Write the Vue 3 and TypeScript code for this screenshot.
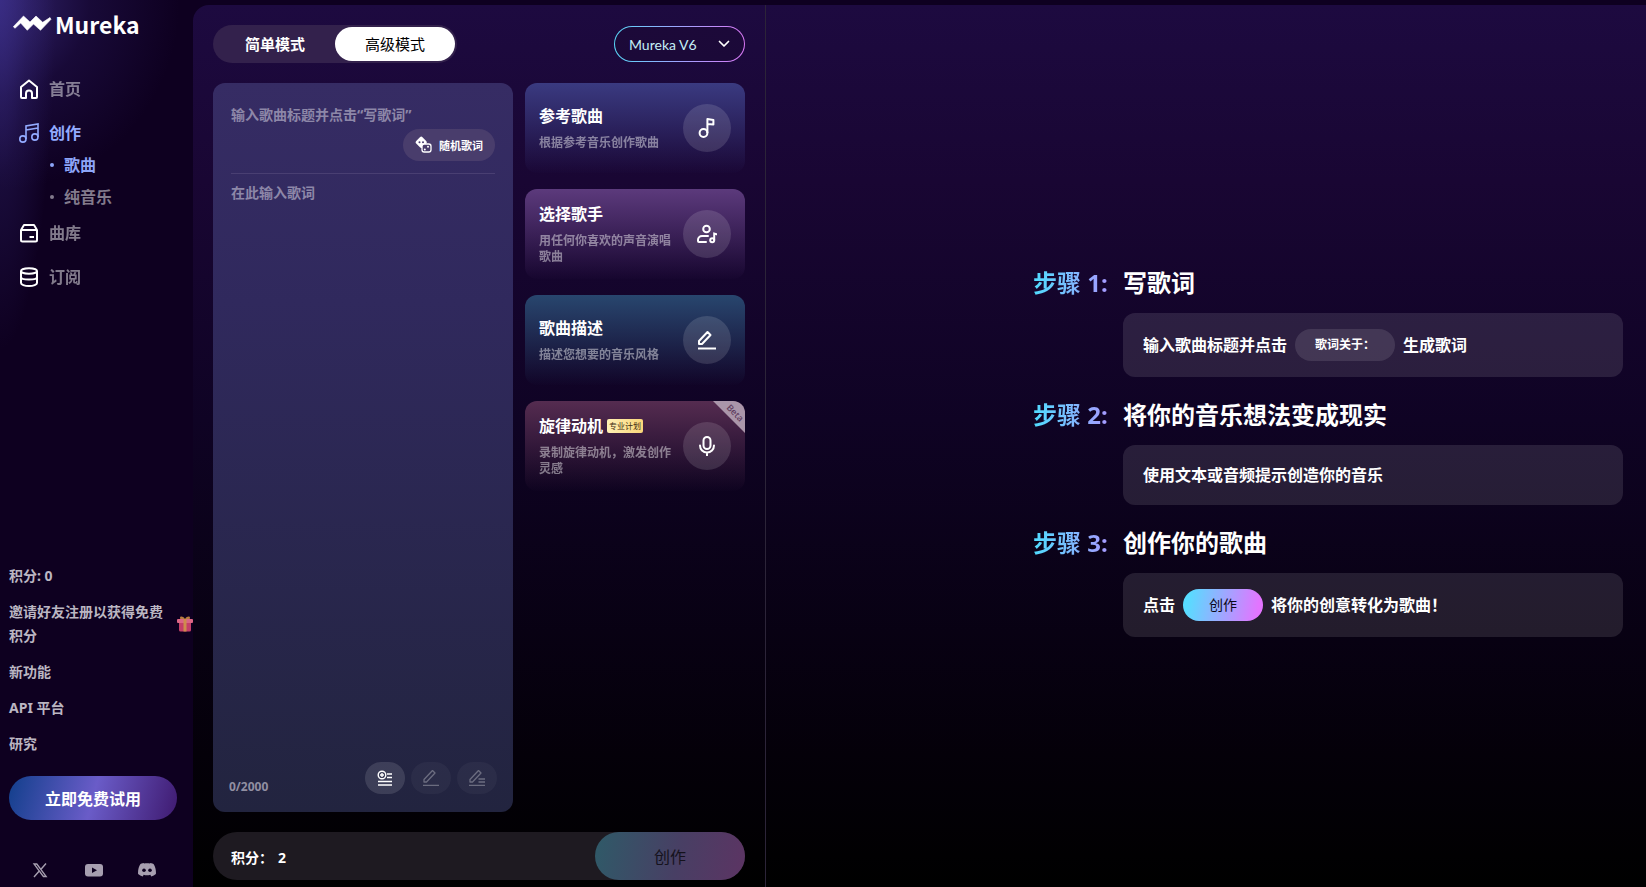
<script setup lang="ts">
import { ref } from 'vue'

type Mode = 'simple' | 'advanced'
type CardIcon = 'note' | 'singer' | 'pencil' | 'mic'

interface FeatureCard {
  id: string
  title: string
  text: string
  icon: CardIcon
  badge?: string
  ribbon?: string
}

const mode = ref<Mode>('advanced')
const version = ref('Mureka V6')
const title = ref('')
const lyrics = ref('')

const modes: { id: Mode; label: string }[] = [
  { id: 'simple', label: '简单模式' },
  { id: 'advanced', label: '高级模式' },
]

const cards: FeatureCard[] = [
  { id: 'reference', title: '参考歌曲', text: '根据参考音乐创作歌曲', icon: 'note' },
  { id: 'vocal', title: '选择歌手', text: '用任何你喜欢的声音演唱歌曲', icon: 'singer' },
  { id: 'prompt', title: '歌曲描述', text: '描述您想要的音乐风格', icon: 'pencil' },
  { id: 'motif', title: '旋律动机', text: '录制旋律动机，激发创作灵感', icon: 'mic', badge: '专业计划', ribbon: 'Beta' },
]

const links = ['新功能', 'API 平台', '研究']
</script>

<template>
  <div class="app">
    <aside class="sidebar">
      <a class="logo" href="#">
        <svg width="40" height="18" viewBox="0 0 40 18" aria-hidden="true">
          <path d="M.3 11.700 10.500 1 17 7l6-6 6.700 6.300L37 2.500l1 1.800-10.500 11L20.500 9l-6.200 6.300L7.700 8 2 13.300z" fill="#fff" stroke="#fff" stroke-width=".6" />
        </svg>
        <span>Mureka</span>
      </a>

      <nav class="nav">
        <a class="nav-item" href="#">
          <svg width="20" height="20" viewBox="0 0 20 20" fill="none" stroke="#fff" stroke-width="2" stroke-linejoin="round" aria-hidden="true">
            <path d="M2 8 10 1.500 18 8v10a1 1 0 0 1-1 1h-4v-4.500a3 3 0 0 0-6 0V19H3a1 1 0 0 1-1-1z" />
          </svg>
          <span>首页</span>
        </a>
        <a class="nav-item active" href="#">
          <svg width="20" height="20" viewBox="0 0 20 20" fill="none" stroke="#93abff" stroke-width="1.600" aria-hidden="true">
            <circle cx="3.900" cy="16" r="3.100" />
            <circle cx="15.900" cy="14" r="3.100" />
            <path d="M7 16V3l12-2v13M7 7l12-2" />
          </svg>
          <span>创作</span>
        </a>
        <div class="sub-nav">
          <a class="sub-item active" href="#">歌曲</a>
          <a class="sub-item" href="#">纯音乐</a>
        </div>
        <a class="nav-item library" href="#">
          <svg width="20" height="20" viewBox="0 0 20 20" fill="none" stroke="#fff" stroke-width="2" stroke-linejoin="round" aria-hidden="true">
            <path d="M2 7h16v10a1.500 1.500 0 0 1-1.500 1.500h-13A1.500 1.500 0 0 1 2 17zM2 7l3-5h10l3 5M10.500 14H15" />
          </svg>
          <span>曲库</span>
        </a>
        <a class="nav-item" href="#">
          <svg width="20" height="20" viewBox="0 0 20 20" fill="none" stroke="#fff" stroke-width="2" aria-hidden="true">
            <ellipse cx="10" cy="4" rx="8" ry="2.800" />
            <path d="M2 4v12c0 1.600 3.500 3 8 3s8-1.400 8-3V4M2 10c0 1.500 3.500 2.500 8 2.500s8-1 8-2.500" />
          </svg>
          <span>订阅</span>
        </a>
      </nav>

      <div class="side-links">
        <span>积分: 0</span>
        <a class="invite" href="#">
          <span>邀请好友注册以获得免费积分</span>
          <svg width="16" height="16" viewBox="0 0 16 16" aria-hidden="true">
            <path d="M8 3C6 0 3 0 3 2s3 2 5 1.500C10 4 13 4 13 2s-3-2-5 1" fill="#b97c40" />
            <path d="M2 6h12v8a1.500 1.500 0 0 1-1.500 1.500h-9A1.500 1.500 0 0 1 2 14z" fill="#c53f68" />
            <rect y="3" width="16" height="4" rx="1" fill="#dc6685" />
            <path d="M6.500 3h3v12.500h-3z" fill="#cf8c4c" />
          </svg>
        </a>
        <a v-for="link in links" :key="link" href="#">{{ link }}</a>
      </div>

      <button class="trial" type="button">立即免费试用</button>

      <div class="social">
        <a href="#" aria-label="X">
          <svg width="18" height="18" viewBox="0 0 18 18" fill="none" stroke="#a79fb0" aria-hidden="true">
            <path d="M3 3h2.800L15.200 15.500h-2.800z" stroke-width="1.300" />
            <path d="M15 2.500 10 8.200M8 10.200 3 16" stroke-width="1.400" />
          </svg>
        </a>
        <a href="#" aria-label="YouTube">
          <svg width="18" height="18" viewBox="0 0 18 18" aria-hidden="true">
            <rect y="3" width="18" height="12.500" rx="3" fill="#a79fb0" />
            <path d="m7 6.500 5 2.800-5 2.700z" fill="#0e0020" />
          </svg>
        </a>
        <a href="#" aria-label="Discord">
          <svg width="18" height="18" viewBox="0 0 18 18" aria-hidden="true">
            <path d="M6 2.500 5.600 2C4.200 2.200 3 2.700 2.300 3.200.7 5.800-.2 9 .1 13c1.400 1.200 2.900 2 4.600 2.400l1-1.700c2.200.7 4.400.7 6.600 0l1 1.700c1.700-.4 3.200-1.200 4.600-2.400.3-4-.6-7.200-2.200-9.800C15 2.700 13.800 2.200 12.400 2l-.4.500c-2-.4-4-.4-6 0z" fill="#a79fb0" />
            <circle cx="6" cy="9.200" r="1.800" fill="#0e0020" />
            <circle cx="12" cy="9.200" r="1.800" fill="#0e0020" />
          </svg>
        </a>
      </div>
    </aside>

    <main class="workspace">
      <section class="composer">
        <header class="toolbar">
          <div class="modes">
            <button
              v-for="item in modes"
              :key="item.id"
              type="button"
              :class="{ selected: mode === item.id }"
              @click="mode = item.id"
            >
              {{ item.label }}
            </button>
          </div>
          <div class="version">
            <select v-model="version" aria-label="模型版本">
              <option>Mureka V6</option>
            </select>
            <svg width="12" height="8" viewBox="0 0 12 8" fill="none" stroke="#fff" stroke-width="1.700" stroke-linecap="round" stroke-linejoin="round" aria-hidden="true">
              <path d="m1.500 1.500 4.500 4.500 4.500-4.500" />
            </svg>
          </div>
        </header>

        <div class="editor-row">
          <div class="editor">
            <input v-model="title" class="song-title" type="text" aria-label="歌曲标题" placeholder="输入歌曲标题并点击“写歌词”" />
            <div class="random-row">
              <button class="random" type="button">
                <svg width="18" height="18" viewBox="0 0 18 18" aria-hidden="true">
                  <path d="M6.200 2.500 2.500 6.300l3.700 3.800 3.700-3.800z" fill="#fff" stroke="#fff" stroke-width="3.600" stroke-linejoin="round" />
                  <circle cx="4.500" cy="6.300" r="1" fill="#493d70" />
                  <circle cx="8" cy="6.300" r="1" fill="#493d70" />
                  <rect x="7" y="8" width="9" height="8" rx="2.200" fill="#493d6c" stroke="#fff" stroke-width="1.300" />
                  <circle cx="9.800" cy="13.500" r="1" fill="#fff" />
                  <circle cx="13" cy="10.800" r="1" fill="#fff" />
                </svg>
                <span>随机歌词</span>
              </button>
            </div>
            <textarea v-model="lyrics" class="lyrics" aria-label="歌词" placeholder="在此输入歌词"></textarea>
            <div class="editor-tools">
              <span class="counter">{{ lyrics.length }}/2000</span>
              <button type="button" aria-label="添加段落">
                <svg width="16" height="16" viewBox="0 0 16 16" fill="none" stroke="#fff" stroke-width="1.400" aria-hidden="true">
                  <circle cx="5" cy="5" r="3.800" />
                  <path d="M3 5h4M5 3v4M10 4h5M10 7.500h5M1 11.500h14M1 15h14" />
                </svg>
              </button>
              <button type="button" disabled aria-label="改写歌词">
                <svg width="16" height="16" viewBox="0 0 16 16" fill="none" stroke="#fff" stroke-width="1.300" stroke-linejoin="round" aria-hidden="true">
                  <path d="m1 9.500 8.500-9 2.500 2.500-8.500 9H1zM0 15.500h16" />
                </svg>
              </button>
              <button type="button" disabled aria-label="续写歌词">
                <svg width="16" height="16" viewBox="0 0 16 16" fill="none" stroke="#fff" stroke-width="1.300" stroke-linejoin="round" aria-hidden="true">
                  <path d="m1 9.500 8.500-9 2.500 2.500-8.500 9H1zM9.500 9H16M9.500 12H16M0 15.500h16" />
                </svg>
              </button>
            </div>
          </div>

          <div class="cards">
            <button v-for="card in cards" :key="card.id" type="button" class="card" :class="card.id">
              <span class="card-copy">
                <span class="card-title">{{ card.title }}<span v-if="card.badge" class="badge">{{ card.badge }}</span></span>
                <span class="card-text">{{ card.text }}</span>
              </span>
              <span class="card-icon">
                <svg v-if="card.icon === 'note'" width="20" height="20" viewBox="0 0 20 20" fill="none" stroke="#fff" stroke-width="2" stroke-linejoin="round" aria-hidden="true">
                  <circle cx="6.500" cy="15" r="3.900" />
                  <path d="M10.400 15V1l6 1v4.500l-6-.5" />
                </svg>
                <svg v-else-if="card.icon === 'singer'" width="20" height="20" viewBox="0 0 20 20" fill="none" stroke="#fff" stroke-width="2" stroke-linecap="round" aria-hidden="true">
                  <circle cx="9.500" cy="5" r="3.300" />
                  <path d="M11 12H5a4 4 0 0 0-4 4v1a1 1 0 0 0 1 1h7M17.200 16V9.500l2.300.7" />
                  <circle cx="15.200" cy="16.200" r="2" />
                </svg>
                <svg v-else-if="card.icon === 'pencil'" width="20" height="20" viewBox="0 0 20 20" fill="none" stroke="#fff" stroke-width="2" stroke-linejoin="round" aria-hidden="true">
                  <path d="m2 11 8.500-9 3 3L5 14H2z" />
                  <path d="M1 18.500h18" />
                </svg>
                <svg v-else width="20" height="20" viewBox="0 0 20 20" fill="none" stroke="#fff" stroke-width="2" stroke-linecap="round" aria-hidden="true">
                  <rect x="6.500" y="1" width="7" height="12" rx="3.500" />
                  <path d="M3 9.500a7 7 0 0 0 14 0M10 16.500v3" />
                </svg>
              </span>
              <span v-if="card.ribbon" class="ribbon">{{ card.ribbon }}</span>
            </button>
          </div>
        </div>

        <footer class="create-bar">
          <div class="cost"><span>积分：</span><span>2</span></div>
          <button type="button" disabled>创作</button>
        </footer>
      </section>

      <section class="guide">
        <ol class="steps">
          <li class="step">
            <span class="step-label">步骤 1:</span>
            <h2>写歌词</h2>
            <div class="step-box">
              <span>输入歌曲标题并点击</span>
              <span class="pill muted">歌词关于：</span>
              <span>生成歌词</span>
            </div>
          </li>
          <li class="step">
            <span class="step-label">步骤 2:</span>
            <h2>将你的音乐想法变成现实</h2>
            <div class="step-box"><span>使用文本或音频提示创造你的音乐</span></div>
          </li>
          <li class="step">
            <span class="step-label">步骤 3:</span>
            <h2>创作你的歌曲</h2>
            <div class="step-box">
              <span>点击</span>
              <span class="pill bright">创作</span>
              <span>将你的创意转化为歌曲！</span>
            </div>
          </li>
        </ol>
      </section>
    </main>
  </div>
</template>

<style>
body {
  background: #0e0020;
}
</style>

<style scoped>
.app {
  display: flex;
  min-height: 100vh;
  color: #fff;
  font-family: "Noto Sans", "Noto Sans CJK SC", sans-serif;
  font-size: 16px;
  line-height: 24px;
  background: #0e0020;
}
.app *,
.app *::before {
  box-sizing: border-box;
}
a {
  color: inherit;
  text-decoration: none;
}
button,
input,
textarea,
select {
  margin: 0;
  padding: 0;
  border: 0;
  color: inherit;
  font-family: inherit;
  background: none;
}
svg {
  display: block;
  flex: none;
}

/* Sidebar */
.sidebar {
  display: flex;
  flex: none;
  flex-direction: column;
  width: 193px;
  padding-bottom: 8px;
  background:
    radial-gradient(ellipse 55px 350px at 0 0, rgba(60, 48, 140, 0.7), rgba(60, 48, 140, 0.25) 50%, transparent),
    radial-gradient(ellipse 180px 190px at 0 0, rgba(66, 52, 146, 0.7), rgba(60, 44, 140, 0.22) 50%, transparent),
    #0e0020;
}
.logo {
  display: flex;
  align-items: center;
  gap: 2px;
  height: 48px;
  padding-left: 13px;
  font-family: "Noto Sans CJK SC", sans-serif;
  font-size: 23px;
  font-weight: 700;
}
.nav {
  display: flex;
  flex-direction: column;
  gap: 20px;
  padding: 29px 19px 0;
}
.nav-item {
  display: flex;
  align-items: center;
  gap: 10px;
  font-weight: 700;
}
.nav-item span {
  opacity: 0.48;
}
.nav-item.active {
  color: #93abff;
}
.nav-item.active span {
  opacity: 1;
}
.sub-nav {
  display: flex;
  flex-direction: column;
  margin: -16px 0 -12px;
  padding-left: 31px;
}
.sub-item {
  display: flex;
  align-items: center;
  gap: 10px;
  height: 32px;
  color: #827a8c;
  font-weight: 700;
}
.sub-item::before {
  width: 4px;
  height: 4px;
  border-radius: 50%;
  background: currentColor;
  content: "";
}
.sub-item.active {
  color: #8da5f8;
}
.side-links {
  display: flex;
  flex-direction: column;
  gap: 12px;
  margin-top: auto;
  padding-left: 9px;
  color: #bbb6c2;
  font-size: 14px;
  font-weight: 700;
}
.invite {
  display: flex;
  align-items: center;
  gap: 12px;
}
.trial {
  flex: none;
  height: 44px;
  margin: 20px 16px 0 9px;
  border-radius: 22px;
  font-size: 16px;
  font-weight: 700;
  background: linear-gradient(105deg, #123f8c, #6a5cc8 50%, #3f1a70);
  cursor: pointer;
}
.social {
  display: flex;
  justify-content: space-between;
  margin-top: 41px;
  padding: 0 37px 0 31px;
}

/* Workspace */
.workspace {
  display: flex;
  flex: 1;
  min-width: 0;
  margin-top: 5px;
  border-radius: 16px 0 0 0;
  background: linear-gradient(180deg, #1d0a40 0%, #190633 20%, #0f0324 47%, #040009 85%, #000 100%);
}
.composer {
  display: flex;
  flex: none;
  flex-direction: column;
  gap: 20px;
  width: 573px;
  padding: 20px 20px 7px;
  border-right: 1px solid #2c2438;
}
.toolbar {
  display: flex;
  align-items: center;
  justify-content: space-between;
}
.modes {
  display: flex;
  padding: 2px;
  border-radius: 19px;
  background: #33214c;
}
.modes button {
  width: 120px;
  height: 34px;
  padding-bottom: 2px;
  border-radius: 17px;
  font-size: 15px;
  font-weight: 700;
  cursor: pointer;
}
.modes .selected {
  color: #000;
  font-weight: 400;
  background: #fff;
}
.version {
  position: relative;
  width: 131px;
  border: 1px solid transparent;
  border-radius: 18px;
  background:
    linear-gradient(#1c0939, #1b0938) padding-box,
    linear-gradient(90deg, #58d8f8, #9fa4ff 50%, #da78f5) border-box;
}
.version select {
  width: 100%;
  height: 34px;
  padding-left: 14px;
  color: #c4eef6;
  font-family: Lato, sans-serif;
  font-size: 14px;
  appearance: none;
}
.version svg {
  position: absolute;
  top: 13px;
  right: 14px;
  pointer-events: none;
}
.editor-row {
  display: flex;
  flex: 1;
  gap: 12px;
}
.editor {
  display: flex;
  flex: 1;
  flex-direction: column;
  min-width: 0;
  padding: 20px 16px 18px 18px;
  border-radius: 12px;
  background: linear-gradient(180deg, #362c64, #30295d 30%, #22243f);
}
.song-title,
.lyrics {
  font-size: 14px;
  font-weight: 700;
  line-height: 24px;
  outline: none;
}
.song-title {
  height: 24px;
}
.song-title::placeholder,
.lyrics::placeholder {
  color: #8d87a8;
  opacity: 1;
}
.random-row {
  display: flex;
  justify-content: flex-end;
  margin-right: 2px;
  padding: 2px 0 12px;
  border-bottom: 1px solid #493f72;
}
.random {
  display: flex;
  align-items: center;
  justify-content: center;
  gap: 6px;
  width: 92px;
  height: 32px;
  border-radius: 16px;
  font-size: 11px;
  font-weight: 700;
  background: #493d6c;
}
.lyrics {
  flex: 1;
  min-height: 80px;
  padding-top: 7px;
  resize: none;
}
.editor-tools {
  display: flex;
  align-items: center;
  gap: 6px;
}
.counter {
  align-self: flex-end;
  margin: 0 auto -5px -2px;
  color: #918fa2;
  font-size: 12px;
  font-weight: 700;
}
.editor-tools button {
  display: flex;
  align-items: center;
  justify-content: center;
  width: 40px;
  height: 32px;
  border-radius: 16px;
  background: rgba(255, 255, 255, 0.12);
}
.editor-tools button:disabled {
  background: rgba(255, 255, 255, 0.04);
}
.editor-tools button:disabled svg {
  opacity: 0.3;
}

/* Feature cards */
.cards {
  display: flex;
  flex: none;
  flex-direction: column;
  gap: 16px;
  width: 220px;
}
.card {
  position: relative;
  display: flex;
  align-items: center;
  gap: 12px;
  height: 90px;
  padding: 0 14px;
  border-radius: 12px;
  text-align: left;
  cursor: pointer;
}
.reference {
  background: linear-gradient(180deg, #3a3a80, transparent 102%);
}
.vocal {
  background: linear-gradient(180deg, #5c3a7c, transparent 102%);
}
.prompt {
  background: linear-gradient(180deg, #28466e, transparent 102%);
}
.motif {
  background: linear-gradient(180deg, #552c50, transparent 102%);
}
.card-copy {
  display: flex;
  flex: 1;
  flex-direction: column;
  gap: 7px;
  min-width: 0;
  padding-bottom: 2px;
}
.card-title {
  display: flex;
  align-items: center;
  gap: 4px;
  font-size: 16px;
  font-weight: 700;
  line-height: 24px;
}
.card-text {
  color: #fff;
  font-size: 12px;
  font-weight: 700;
  line-height: 16px;
  opacity: 0.45;
}
.badge {
  padding: 0 2px;
  border-radius: 2px;
  color: #3d2a10;
  font-size: 8px;
  font-weight: 400;
  line-height: 14px;
  background: linear-gradient(90deg, #fff0b4, #f8d579);
}
.card-icon {
  display: flex;
  flex: none;
  align-items: center;
  justify-content: center;
  width: 48px;
  height: 48px;
  border-radius: 50%;
  background: rgba(255, 255, 255, 0.13);
}
.ribbon {
  position: absolute;
  top: 6px;
  right: -3px;
  width: 26px;
  color: #5f3d5e;
  font-size: 9px;
  font-weight: 500;
  line-height: 12px;
  text-align: center;
  transform: rotate(45deg);
}
.card:has(.ribbon)::before {
  position: absolute;
  top: 0;
  right: 0;
  width: 32px;
  height: 32px;
  border-radius: 0 12px 0 0;
  background: #aa96aa;
  clip-path: polygon(0 0, 100% 0, 100% 100%);
  content: "";
}

/* Create bar */
.create-bar {
  display: flex;
  flex: none;
  align-items: center;
  justify-content: space-between;
  padding-left: 18px;
  border-radius: 24px;
  font-size: 14px;
  font-weight: 700;
  background: #1e1a21;
}
.cost {
  display: flex;
  gap: 5px;
  padding-top: 4px;
}
.create-bar button {
  width: 150px;
  height: 48px;
  border-radius: 24px;
  color: #15121c;
  font-size: 16px;
  background: linear-gradient(100deg, #2f5a68, #483f64 55%, #5c3463);
}

/* Guide */
.guide {
  display: flex;
  flex: 1;
  align-items: center;
  justify-content: flex-end;
  min-width: 0;
  padding: 10px 23px 0;
}
.steps {
  display: flex;
  flex-direction: column;
  gap: 20px;
  width: 590px;
  margin: 0;
  padding: 0;
  list-style: none;
}
.step {
  display: grid;
  grid-template-columns: 90px minmax(0, 1fr);
  row-gap: 12px;
}
.step-label,
.step h2 {
  margin: 0;
  font-size: 24px;
  font-weight: 700;
  line-height: 36px;
}
.step-label {
  justify-self: start;
  color: transparent;
  background: linear-gradient(90deg, #50dcff, #a79aff);
  background-clip: text;
}
.step-box {
  display: flex;
  grid-column: 2;
  align-items: center;
  gap: 8px;
  padding: 16px 20px;
  border-radius: 12px;
  font-weight: 700;
  line-height: 28px;
  background: rgba(255, 255, 255, 0.11);
}
.pill {
  height: 32px;
  border-radius: 16px;
  line-height: 32px;
  text-align: center;
}
.muted {
  width: 100px;
  font-size: 12px;
  background: rgba(255, 255, 255, 0.11);
}
.bright {
  width: 80px;
  color: #0c0818;
  font-size: 14px;
  font-weight: 400;
  background: linear-gradient(100deg, #58dcff 8%, #e374ff 92%);
}
</style>
